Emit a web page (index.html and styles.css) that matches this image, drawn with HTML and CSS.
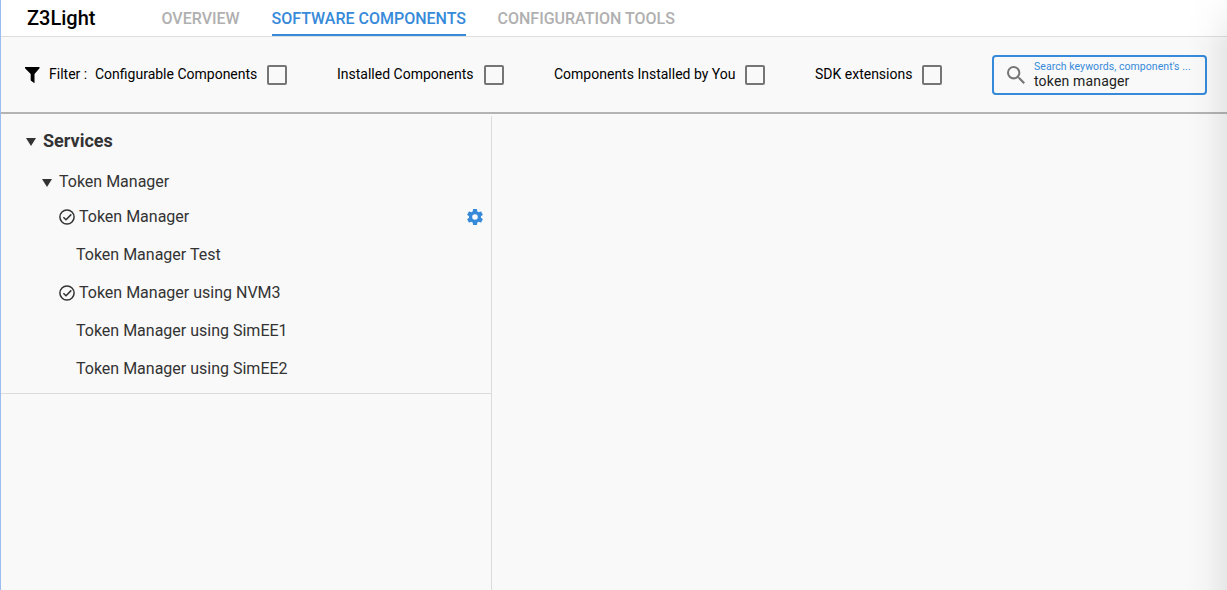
FILE: index.html
```html
<!DOCTYPE html>
<html lang="en">
<head>
<meta charset="utf-8">
<title>Z3Light</title>
<link rel="stylesheet" href="styles.css">
</head>
<body>
<div class="app">
  <header class="header">
    <h1 class="project">Z3Light</h1>
    <nav class="tabs">
      <a class="tab tab-overview">OVERVIEW</a>
      <a class="tab tab-components active">SOFTWARE COMPONENTS</a>
      <a class="tab tab-tools">CONFIGURATION TOOLS</a>
    </nav>
  </header>
  <section class="filters">
    <svg class="funnel" viewBox="0 0 16 18"><path d="M1 1h14.500v1.300L10.500 8v9.300L6.700 14.500V8L1 2.300z"/></svg>
    <span class="filter-title">Filter :</span>
    <label class="filter"><span class="label-configurable">Configurable Components</span><i class="box"></i></label>
    <label class="filter"><span class="label-installed">Installed Components</span><i class="box"></i></label>
    <label class="filter"><span class="label-user">Components Installed by You</span><i class="box"></i></label>
    <label class="filter"><span class="label-sdk">SDK extensions</span><i class="box"></i></label>
    <div class="search">
      <svg class="search-icon" viewBox="3 3 17.490 17.490"><path d="M15.500 14h-.79l-.28-.27A6.471 6.471 0 0 0 16 9.500 6.500 6.500 0 1 0 9.500 16c1.610 0 3.090-.59 4.230-1.570l.27.28v.79l5 4.990L20.490 19l-4.990-5zm-6 0C7.010 14 5 11.990 5 9.500S7.010 5 9.500 5 14 7.010 14 9.500 11.990 14 9.500 14z"/></svg>
      <div class="search-text">
        <span class="hint">Search keywords, component's ...</span>
        <span class="query">token manager</span>
      </div>
    </div>
  </section>
  <main class="content">
    <aside class="sidebar">
      <div class="tree">
        <div class="row category"><i class="arrow"></i><span>Services</span></div>
        <div class="row group"><i class="arrow"></i><span>Token Manager</span></div>
        <div class="row item"><svg class="check" viewBox="0 0 16 16"><circle cx="8" cy="8" r="7.100"/><path d="M4.400 8.200l2.600 2.600 5.300-5.400"/></svg><span>Token Manager</span>
          <svg class="gear" viewBox="2 2 20 20"><path d="M19.430 12.980c.04-.32.07-.64.07-.98s-.03-.66-.07-.98l2.110-1.650c.19-.15.24-.42.12-.64l-2-3.460c-.12-.22-.39-.3-.61-.22l-2.490 1c-.52-.4-1.080-.73-1.690-.98l-.38-2.650A.488.488 0 0 0 14 2h-4c-.25 0-.46.18-.49.42l-.38 2.650c-.61.25-1.170.59-1.690.98l-2.490-1c-.23-.09-.49 0-.61.22l-2 3.460c-.13.22-.07.49.12.64l2.110 1.650c-.04.32-.07.65-.07.98s.03.66.07.98l-2.110 1.650c-.19.15-.24.42-.12.64l2 3.460c.12.22.39.3.61.22l2.490-1c.52.4 1.080.73 1.690.98l.38 2.650c.03.24.24.42.49.42h4c.25 0 .46-.18.49-.42l.38-2.650c.61-.25 1.170-.59 1.690-.98l2.490 1c.23.09.49 0 .61-.22l2-3.460c.12-.22.07-.49-.12-.64l-2.110-1.650zM12 15.500A3.500 3.500 0 1 1 12 8.500a3.500 3.500 0 0 1 0 7z"/></svg>
        </div>
        <div class="row item plain"><span>Token Manager Test</span></div>
        <div class="row item"><svg class="check" viewBox="0 0 16 16"><circle cx="8" cy="8" r="7.100"/><path d="M4.400 8.200l2.600 2.600 5.300-5.400"/></svg><span>Token Manager using NVM3</span></div>
        <div class="row item plain"><span>Token Manager using SimEE1</span></div>
        <div class="row item plain"><span>Token Manager using SimEE2</span></div>
      </div>
    </aside>
    <section class="detail"></section>
  </main>
  <div class="edge-shade"></div>
</div>
</body>
</html>
```

FILE: styles.css
```css
* { box-sizing: border-box; }
body { margin: 0; font-family: Roboto, "Liberation Sans", sans-serif; color: #000; white-space: nowrap; }
.app { position: relative; display: flex; flex-direction: column; height: 590px; overflow: hidden; background: #f9f9f9; border-left: 1px solid #9bbcf0; }
.header { display: flex; flex: none; height: 37px; padding-left: 26px; background: #fff; border-bottom: 1px solid #dedede; }
.project { width: 134.500px; margin: 0; font-size: 20px; line-height: 36px; font-weight: 500; }
.tabs { display: flex; gap: 32px; }
.tab { height: 36px; font-size: 16px; line-height: 37px; font-weight: 500; color: #b0b0b0; }
.tab-overview { width: 78px; }
.tab-components { width: 194px; }
.active { color: #368ad9; border-bottom: 2px solid #368ad9; }
.filters { display: flex; flex: none; align-items: center; height: 77px; padding: 0 20px 1px 23px; border-bottom: 2px solid #b4b4b4; font-size: 14px; line-height: 20px; }
.funnel { width: 16px; height: 18px; margin: 2px 9px 0 0; }
.filter-title { width: 46px; }
.filter { display: flex; align-items: center; gap: 10px; margin-right: 50px; }
.label-configurable { width: 162px; }
.label-installed { width: 137px; }
.label-user { width: 181px; }
.label-sdk { width: 97px; }
.box { width: 20px; height: 20px; margin-top: 2px; border: 2px solid #757575; border-radius: 2px; }
.search { display: flex; align-items: center; width: 215px; height: 40px; margin: 2px 0 0 auto; padding-left: 13px; border: 2px solid #368ad9; border-radius: 4px; }
.search-icon { width: 18px; height: 18px; margin-right: 9px; fill: #757575; }
.search-text { display: flex; flex-direction: column; padding-bottom: 2px; }
.hint { font-size: 10.500px; line-height: 13px; letter-spacing: .06px; color: #368ad9; }
.query { font-size: 14px; line-height: 16px; letter-spacing: .17px; color: #212121; }
.content { display: flex; flex: 1; padding-top: 2px; }
.sidebar { width: 491px; border-right: 1px solid #dcdcdc; }
.tree { height: 278px; padding-top: 5px; border-bottom: 1px solid #dcdcdc; }
.row { display: flex; align-items: center; height: 38px; font-size: 16px; color: #333; }
.category { padding-left: 25px; font-size: 18px; font-weight: 700; }
.group { padding: 6px 0 0 41px; }
.arrow { width: 10px; height: 8px; margin: 4px 7px 0 0; background: #333; clip-path: polygon(0 0, 100% 0, 50% 100%); }
.item { padding-left: 58px; }
.plain { padding-left: 75px; }
.check { width: 16px; height: 16px; margin: 2px 4px 0 0; fill: none; stroke: #333; stroke-width: 1.500; }
.gear { width: 16px; height: 16px; margin: 2px 8px 0 auto; fill: #368ad9; }
.detail { flex: 1; }
.edge-shade { position: absolute; top: 0; right: 0; bottom: 0; width: 40px; background: linear-gradient(to right, transparent, rgba(0, 0, 0, .018) 50%, rgba(0, 0, 0, .07)); mask-image: linear-gradient(to bottom, rgba(0, 0, 0, .2), #000 50px); pointer-events: none; }
```
